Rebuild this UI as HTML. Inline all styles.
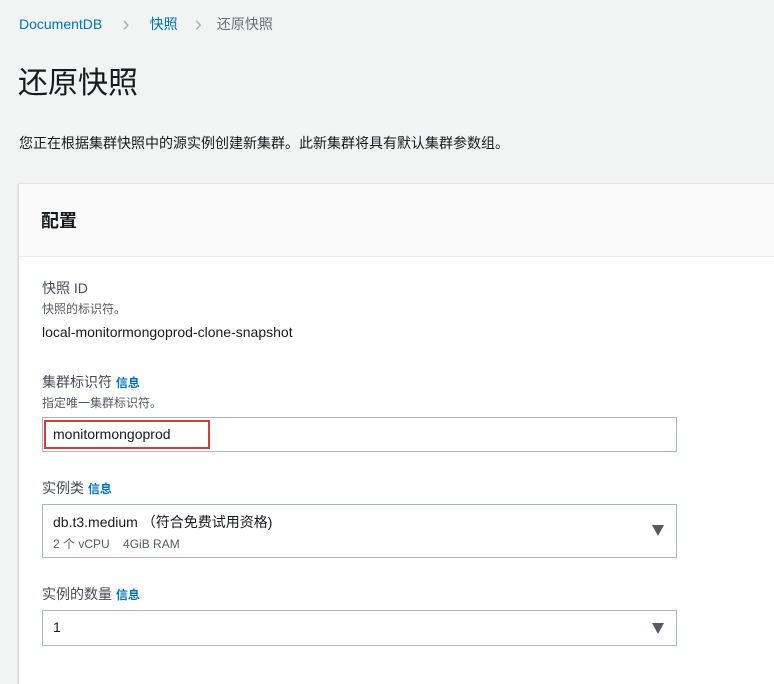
<!DOCTYPE html>
<html><head><meta charset="utf-8"><style>
body{margin:0;width:774px;height:668px;overflow:hidden;background:#f2f3f3;font-family:"Liberation Sans","Noto Sans CJK SC",sans-serif;color:#16191f;position:relative}
.a{position:absolute;white-space:nowrap}
.lk{color:#0073bb}
.panel{position:absolute;left:18px;top:183px;width:800px;height:500px;background:#fff;border-left:1px solid #dcdcdc;border-top:1px solid #e5e5e5;box-shadow:0 1px 1px rgba(0,28,36,.3)}
.hd{position:absolute;left:0;top:0;right:0;height:72px;background:#fafafa;border-bottom:1px solid #eaeded}
.box{position:absolute;left:42px;width:633px;border:1px solid #aab7b8;background:#fff}
.lbl{font-size:14px;color:#444b54}
.sm{font-size:12px;color:#545b64}
.info{font-size:12px;font-weight:bold;color:#0073bb}
.tri{position:absolute;right:12px;width:0;height:0;border-left:6px solid transparent;border-right:6px solid transparent;border-top:11px solid #545b64}
.ch{color:#aab7b8;font-size:22px;line-height:14px;vertical-align:-2px}
</style></head><body>
<div class="a" style="left:19px;top:14px;font-size:14px"><span class="lk">DocumentDB</span><span class="ch" style="margin:0 20px 0 20px">›</span><span class="lk">快照</span><span class="ch" style="margin:0 15px 0 17px">›</span><span style="color:#687078">还原快照</span></div>
<div class="a" style="left:18px;top:58px;font-size:30px;color:#16191f">还原快照</div>
<div class="a" style="left:19px;top:133px;font-size:14px;color:#16191f">您正在根据集群快照中的源实例创建新集群。此新集群将具有默认集群参数组。</div>
<div class="panel"><div class="hd"></div></div>
<div class="a" style="left:41px;top:207px;font-size:18px;font-weight:bold">配置</div>
<div class="a lbl" style="left:42px;top:278px">快照 ID</div>
<div class="a sm" style="left:42px;top:300px">快照的标识符。</div>
<div class="a" style="left:42px;top:324px;font-size:14px">local-monitormongoprod-clone-snapshot</div>
<div class="a lbl" style="left:42px;top:372px">集群标识符 <span class="info">信息</span></div>
<div class="a sm" style="left:42px;top:394px">指定唯一集群标识符。</div>
<div class="box" style="top:417px;height:33px"></div>
<div class="a" style="left:44px;top:420px;width:162px;height:25px;border:2px solid #d13c3c"></div>
<div class="a" style="left:53px;top:426px;font-size:14px">monitormongoprod</div>
<div class="a lbl" style="left:42px;top:478px">实例类 <span class="info">信息</span></div>
<div class="box" style="top:504px;height:52px"><div class="tri" style="top:20px"></div></div>
<div class="a" style="left:53px;top:512px;font-size:14px">db.t3.medium （符合免费试用资格)</div>
<div class="a sm" style="left:53px;top:535px">2 个 vCPU &nbsp;&nbsp;&nbsp;4GiB RAM</div>
<div class="a lbl" style="left:42px;top:584px">实例的数量 <span class="info">信息</span></div>
<div class="box" style="top:610px;height:34px"><div class="tri" style="top:12px"></div></div>
<div class="a" style="left:53px;top:619px;font-size:14px;color:#16191f">1</div>
</body></html>
